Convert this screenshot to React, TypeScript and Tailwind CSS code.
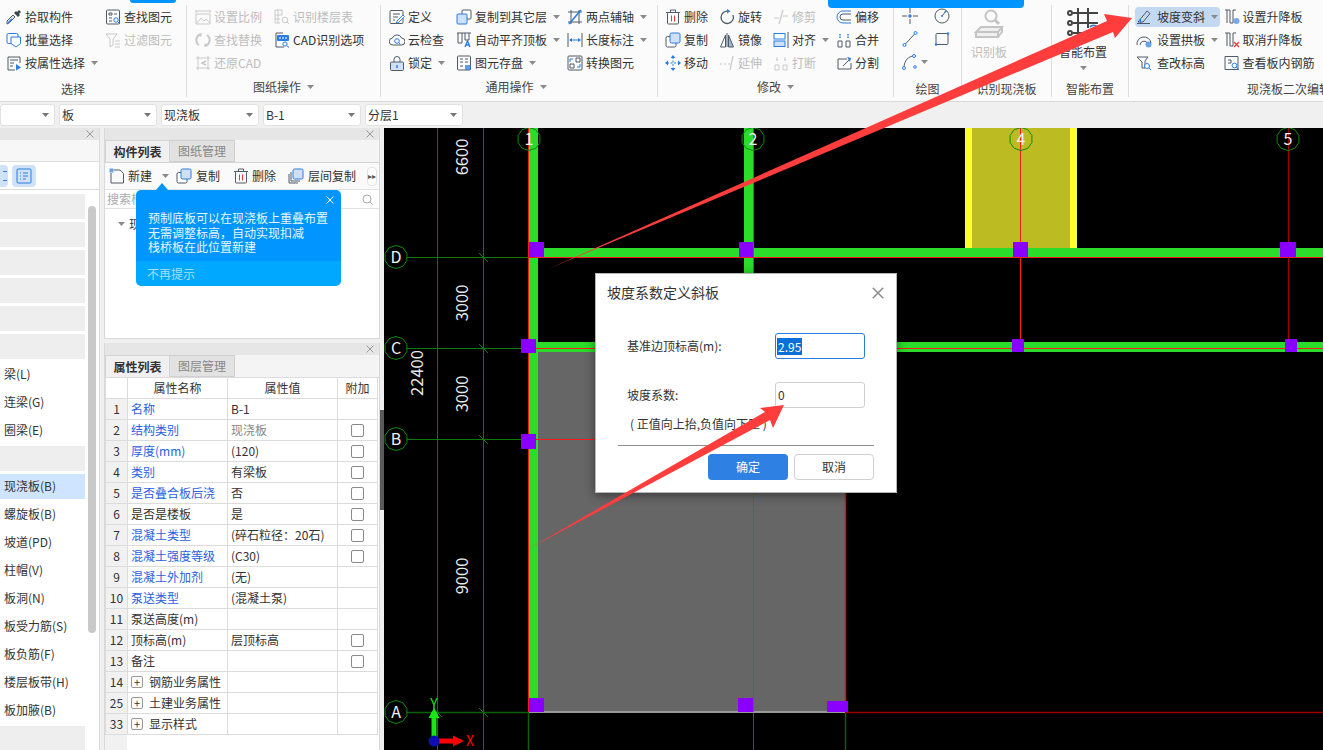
import type { ReactNode } from "react";

const D = "#4f5b66";
const B = "#2b7de0";
const L = "#cfe0f8";
const G = "#c9c9c9";
const R = "#e5393b";

function Ico({ children, size = 16 }: { children: ReactNode; size?: number }) {
  return (
    <svg width={size} height={size} viewBox="0 0 16 16" fill="none" strokeWidth="1" className="shrink-0">
      {children}
    </svg>
  );
}

const icons: Record<string, ReactNode> = {
  pick: (
    <>
      <path d="M1 15l2-1 6-6-2-2-6 6z" stroke={D} fill="#dfe6ee" />
      <path d="M8 4l4 4 2-2-1-1 2-2-2-2-2 2-1-1z" fill="#3d4852" />
      <path d="M2 14l4-4" stroke={B} strokeWidth="1.5" />
    </>
  ),
  batch: (
    <>
      <rect x="1" y="1.5" width="11" height="10" rx="1.5" stroke={B} />
      <path d="M5 5h9.5v6.5l-4.5 3.5-5-3.5z" stroke={B} fill="#fff" />
    </>
  ),
  attr: (
    <>
      <path d="M14 8V2H2v13h7" stroke={D} />
      <path d="M4 5h8M4 8h4M4 11h3" stroke={D} />
      <path d="M10 9l5 3.5-5 3z" fill={B} />
    </>
  ),
  find: (
    <>
      <rect x="1.5" y="1" width="13" height="14" rx="1" stroke={D} />
      <path d="M4 4h3v2H4zM9 5h3M4 9h3M4 12h3" stroke={D} />
      <circle cx="11" cy="11" r="2.2" stroke={B} fill="#fff" />
      <path d="M12.6 12.6L15 15" stroke={B} />
    </>
  ),
  filter: (
    <>
      <path d="M1 2h11L8 7v6L5 15V7z" stroke={G} />
      <path d="M10 9h5M10 12h5M10 15h5" stroke={G} />
    </>
  ),
  scale: (
    <>
      <path d="M1 5h14v10H1zM1 1v3M15 1v3M1 2h14" stroke={G} />
      <path d="M2 14l4-5 3 3 2-2 4 4" stroke={G} />
    </>
  ),
  floors: (
    <>
      <path d="M1 1h7v5H1zM1 6v8h5M4 1v13M1 10h5" stroke={G} />
      <circle cx="11" cy="11" r="2.8" stroke={G} />
      <path d="M13 13l2 2" stroke={G} />
    </>
  ),
  replace: (
    <>
      <path d="M5 2.5A6 6 0 0 0 4 13M11 13.5A6 6 0 0 0 12 3" stroke={G} strokeWidth="2" />
      <path d="M3 2l4-1-1 4zM13 14l-4 1 1-4z" fill={G} />
    </>
  ),
  cad: (
    <>
      <path d="M9 1H2v14h8" stroke={D} />
      <rect x="3" y="3" width="12" height="6" rx="1" fill={B} />
      <path d="M5 6h2M8 6h2M11 6h2" stroke="#fff" />
      <circle cx="11" cy="12" r="2.1" stroke={B} />
      <path d="M12.6 13.6L15 15.5" stroke={B} />
    </>
  ),
  restore: (
    <>
      <path d="M1 3h14M1 13h14M3 1v14M13 1v14" stroke={G} />
      <path d="M11 6L7 8l4 2" stroke={G} strokeWidth="1.5" />
    </>
  ),
  define: (
    <>
      <rect x="1" y="1.5" width="13" height="13" rx="1" stroke={D} />
      <path d="M4 5h7M4 8h5M4 11h2" stroke={D} />
      <path d="M8 12l6-6 1.5 1.5-6 6-2 .5z" stroke={B} fill="#fff" />
    </>
  ),
  cloud: (
    <>
      <path d="M4 13a3.5 3.5 0 0 1-.5-7 4.8 4.8 0 0 1 9 0 3.5 3.5 0 0 1 0 7z" stroke={D} />
      <circle cx="8" cy="9" r="2.3" stroke={B} />
      <path d="M9.6 10.6l1.8 1.6" stroke={B} />
    </>
  ),
  lock: (
    <>
      <path d="M5 7V4.5a3 3 0 0 1 6 0V7" stroke={D} />
      <rect x="1.5" y="7" width="13" height="8.5" rx="1" stroke={D} fill={L} />
      <path d="M8 10v3" stroke={B} strokeWidth="1.5" />
    </>
  ),
  copyTo: (
    <>
      <rect x="6" y="1" width="9" height="9" rx="1" stroke={D} fill="#fff" />
      <rect x="1" y="5" width="10" height="10" rx="1" stroke={B} fill={L} />
    </>
  ),
  autoTop: (
    <>
      <path d="M1 1h14" stroke={D} />
      <path d="M2 1v10h4V1M9 1v7h4V1" stroke={D} />
      <path d="M9 15l2.5-6 2.5 6M10 13h3" stroke={B} strokeWidth="1.4" />
    </>
  ),
  save: (
    <>
      <rect x="1.5" y="1" width="13" height="14" rx="1" stroke={D} />
      <path d="M4 4h3M9 4h3M4 7h3M9 7h3M4 11h3" stroke={D} />
      <rect x="9" y="10" width="5.5" height="5" fill={B} opacity=".75" />
    </>
  ),
  twoPoint: (
    <>
      <path d="M1 3h14M1 13h14M4 1v14M12 1v14" stroke={D} />
      <path d="M2 15L14 1" stroke={B} strokeWidth="1.6" />
    </>
  ),
  dim: (
    <>
      <path d="M1 1v14M15 1v14" stroke={D} />
      <path d="M3 8h10" stroke={B} />
      <path d="M2 8l3-2v4zM14 8l-3-2v4z" fill={B} />
    </>
  ),
  convert: (
    <>
      <rect x="1" y="1" width="14" height="14" rx="1" stroke={D} />
      <path d="M9 3h4v4H9zM3 9h4v4H3z" stroke={D} />
      <path d="M3 7V4h3M13 9v3h-3" stroke={B} />
    </>
  ),
  trash: (
    <>
      <path d="M1 3.5h14M5.5 3V1h5v2" stroke={D} />
      <rect x="2.5" y="3.5" width="11" height="11.5" rx="1" stroke={D} />
      <path d="M6.5 6.5v6M9.5 6.5v6" stroke={R} />
    </>
  ),
  copy: (
    <>
      <rect x="1" y="4.5" width="10" height="10.5" rx="1.5" stroke={D} fill="#fff" />
      <rect x="5" y="1" width="10" height="10" rx="1.5" stroke={B} fill={L} />
    </>
  ),
  floorCopy: (
    <>
      <path d="M1 6v9h9M3 4v9h9" stroke={D} />
      <rect x="5" y="1" width="10" height="10" rx="1.5" stroke={B} fill={L} />
    </>
  ),
  move: (
    <>
      <path d="M8 2v12M2 8h12" stroke={B} strokeDasharray="2 1.5" />
      <path d="M8 0l2.5 3h-5zM8 16l2.5-3h-5zM0 8l3-2.5v5zM16 8l-3-2.5v5z" fill={B} />
    </>
  ),
  rotate: (
    <>
      <path d="M9.5 2.2A6.2 6.2 0 1 0 14 6" stroke={D} strokeWidth="1.3" />
      <path d="M8 0l3.5 2.3L8 4.5z" fill={B} />
    </>
  ),
  mirror: (
    <>
      <path d="M8 1v14" stroke={D} />
      <path d="M6.5 3L1.5 15h5z" stroke={D} fill="#fff" />
      <path d="M9.5 3l5 12h-5z" fill="#9db6d6" stroke={D} />
    </>
  ),
  trim: (
    <>
      <path d="M1 9h5M10 7h5" stroke={G} strokeWidth="1.2" />
      <path d="M6 15L10 1" stroke={G} strokeWidth="1.2" />
    </>
  ),
  extend: (
    <>
      <path d="M1 9h2M5 9h2M9 9h2" stroke={G} strokeWidth="1.2" />
      <path d="M11 15l3-14" stroke={G} strokeWidth="1.2" />
    </>
  ),
  align: (
    <>
      <rect x="1" y="1.5" width="11" height="5.5" stroke={B} />
      <rect x="1" y="9" width="11" height="5.5" stroke={B} fill={L} />
      <path d="M15 0v16" stroke={D} />
    </>
  ),
  breakAt: (
    <>
      <path d="M2 15v-5h4v5zM10 15v-5h4v5z" stroke={G} />
      <path d="M4 2v3M3 5h2M12 2v3M11 5h2" stroke={G} />
    </>
  ),
  offset: (
    <>
      <path d="M15 2H7a6 6 0 0 0 0 12h8" stroke={B} />
      <path d="M15 5H7a3 3 0 0 0 0 6h8" stroke={D} />
    </>
  ),
  merge: (
    <>
      <path d="M2 15V9h4v6zM10 15V9h4v6z" stroke={D} />
      <path d="M4 2v4M12 2v4" stroke={B} strokeWidth="1.5" strokeDasharray="1.5 1" />
    </>
  ),
  split: (
    <>
      <path d="M11 4H2v10h13V8" stroke={D} />
      <path d="M7 11l7-7" stroke={D} />
      <path d="M11 2l4 1-1 4z" fill={B} />
    </>
  ),
  point: (
    <>
      <path d="M0 8h5M11 8h5M8 0v5M8 11v5" stroke={D} />
      <circle cx="8" cy="8" r="1.7" fill={B} />
    </>
  ),
  clock: (
    <>
      <circle cx="8" cy="8" r="7" stroke={D} />
      <path d="M8 8l4-5" stroke={D} />
      <circle cx="8" cy="8" r="1" fill={B} />
      <circle cx="11.5" cy="3.5" r="1" fill={B} />
    </>
  ),
  line: (
    <>
      <path d="M2.5 14L13.5 2" stroke={D} />
      <circle cx="2.5" cy="14" r="1.5" stroke={B} fill="#fff" />
      <circle cx="13.5" cy="2" r="1.5" stroke={B} fill="#fff" />
    </>
  ),
  rect: (
    <>
      <rect x="2" y="2.5" width="12" height="11" rx="1" stroke={D} />
      <circle cx="2" cy="13.5" r="1.2" fill={B} />
      <circle cx="14" cy="2.5" r="1.2" fill={B} />
    </>
  ),
  arc: (
    <>
      <path d="M2 14C2 6 7 2 12 2" stroke={D} />
      <circle cx="2" cy="14" r="1.5" stroke={B} fill="#fff" />
      <circle cx="12" cy="2" r="1.5" stroke={B} fill="#fff" />
      <circle cx="13" cy="13" r="1.3" stroke={B} fill="#fff" />
    </>
  ),
  slope: (
    <>
      <path d="M2 13L11 2l3 2.5L7 13z" stroke={D} />
      <path d="M1 14.5h13" stroke={D} />
      <path d="M4.5 10v4" stroke={B} />
    </>
  ),
  arch: (
    <>
      <path d="M1 13a7 7 0 0 1 14-2M4 13a4 4 0 0 1 7-2.5" stroke={D} />
      <circle cx="12.5" cy="12.5" r="3" fill={B} opacity=".7" />
    </>
  ),
  markup: (
    <>
      <path d="M1 2h11L9 6v7H6V7z" stroke={D} />
      <circle cx="11" cy="11" r="2.5" stroke={B} fill="#fff" />
      <path d="M13 13l2 2" stroke={B} />
    </>
  ),
  raise: (
    <>
      <path d="M1 1h5v13h3V1h3" stroke={D} />
      <path d="M3 1v13" stroke={D} />
      <circle cx="12.5" cy="12" r="3" fill={B} opacity=".65" />
    </>
  ),
  cancel: (
    <>
      <path d="M1 1h5v13h3V1h3" stroke={D} />
      <path d="M3 1v13" stroke={D} />
      <path d="M10 10l5 5M15 10l-5 5" stroke={R} strokeWidth="1.3" />
    </>
  ),
  rebar: (
    <>
      <path d="M1 1.5h13v13H1z" stroke={D} />
      <path d="M4 5h3v3M4 8h3" stroke={D} />
      <circle cx="10.5" cy="10.5" r="2.4" stroke={B} fill="#fff" />
      <path d="M12.3 12.3L15 15" stroke={B} />
    </>
  ),
  newDoc: (
    <>
      <path d="M5 2h6l3.5 3.5V15H2V5" stroke={D} />
      <rect x="0.5" y="0.5" width="4" height="4" fill={B} opacity=".7" />
    </>
  ),
  listIcon: (
    <>
      <rect x="1" y="1" width="14" height="14" rx="1" stroke={B} />
      <path d="M4 5h1M7 5h5M4 8h1M7 8h5M4 11h1M7 11h3" stroke={B} />
    </>
  ),
};

function Caret({ color = "#8a8a8a" }: { color?: string }) {
  return (
    <svg width="7" height="4" viewBox="0 0 7 4" className="shrink-0">
      <path d="M0 0h7L3.5 4z" fill={color} />
    </svg>
  );
}

type Item = { icon: string; label: string; caret?: boolean; off?: boolean; active?: boolean };
type Group = { label: string; labelClass: string; width: string; pad: string; cols: { w: string; items: Item[] }[] };

const groups: Group[] = [
  {
    label: "选择",
    labelClass: "pr-[40px] pt-[3px]",
    width: "w-[187px]",
    pad: "pl-[6px]",
    cols: [
      { w: "w-[99px]", items: [{ icon: "pick", label: "拾取构件" }, { icon: "batch", label: "批量选择" }, { icon: "attr", label: "按属性选择", caret: true }] },
      { w: "w-[80px]", items: [{ icon: "find", label: "查找图元" }, { icon: "filter", label: "过滤图元", off: true }] },
    ],
  },
  {
    label: "图纸操作",
    labelClass: "",
    width: "w-[194px]",
    pad: "pl-[8px]",
    cols: [
      { w: "w-[79px]", items: [{ icon: "scale", label: "设置比例", off: true }, { icon: "replace", label: "查找替换", off: true }, { icon: "restore", label: "还原CAD", off: true }] },
      { w: "w-[100px]", items: [{ icon: "floors", label: "识别楼层表", off: true }, { icon: "cad", label: "CAD识别选项" }] },
    ],
  },
  {
    label: "通用操作",
    labelClass: "pr-[6px]",
    width: "w-[277px]",
    pad: "pl-[8px]",
    cols: [
      { w: "w-[67px]", items: [{ icon: "define", label: "定义" }, { icon: "cloud", label: "云检查" }, { icon: "lock", label: "锁定", caret: true }] },
      { w: "w-[111px]", items: [{ icon: "copyTo", label: "复制到其它层", caret: true }, { icon: "autoTop", label: "自动平齐顶板", caret: true }, { icon: "save", label: "图元存盘", caret: true }] },
      { w: "w-[88px]", items: [{ icon: "twoPoint", label: "两点辅轴", caret: true }, { icon: "dim", label: "长度标注", caret: true }, { icon: "convert", label: "转换图元" }] },
    ],
  },
  {
    label: "修改",
    labelClass: "",
    width: "w-[236px]",
    pad: "pl-[7px]",
    cols: [
      { w: "w-[54px]", items: [{ icon: "trash", label: "删除" }, { icon: "copy", label: "复制" }, { icon: "move", label: "移动" }] },
      { w: "w-[54px]", items: [{ icon: "rotate", label: "旋转" }, { icon: "mirror", label: "镜像" }, { icon: "extend", label: "延伸", off: true }] },
      { w: "w-[63px]", items: [{ icon: "trim", label: "修剪", off: true }, { icon: "align", label: "对齐", caret: true }, { icon: "breakAt", label: "打断", off: true }] },
      { w: "w-[52px]", items: [{ icon: "offset", label: "偏移" }, { icon: "merge", label: "合并" }, { icon: "split", label: "分割" }] },
    ],
  },
];

function RibbonItem({ item, textMl = "ml-[3px]" }: { item: Item; textMl?: string }) {
  return (
    <div className={`flex h-[20px] items-center whitespace-nowrap ${item.off ? "text-[#bdbdbd]" : "text-[#333]"} ${item.active ? "-ml-[1px] w-[85px] rounded bg-[#c3d9f2] pl-[1px]" : ""}`}>
      <Ico>{icons[item.icon]}</Ico>
      <span className={textMl}>{item.label}</span>
      {item.caret && (
        <span className="ml-[6px]">
          <Caret />
        </span>
      )}
    </div>
  );
}

function Column({ w, items, textMl }: { w: string; items: Item[]; textMl?: string }) {
  return (
    <div className={`flex flex-col gap-[3px] ${w}`}>
      {items.map((it) => (
        <RibbonItem key={it.label} item={it} textMl={textMl} />
      ))}
    </div>
  );
}

function RibbonGroup({ width, label, labelClass, caret, border = true, children }: { width: string; label: string; labelClass?: string; caret?: boolean; border?: boolean; children: ReactNode }) {
  return (
    <div className={`mt-[5px] flex h-[92px] shrink-0 flex-col ${width} ${border ? "border-r border-[#dedede]" : ""}`}>
      <div className="h-[72px] pt-[2px]">{children}</div>
      <div className={`flex h-[20px] items-center justify-center gap-[6px] whitespace-nowrap text-[#444] ${labelClass ?? ""}`}>
        <span>{label}</span>
        {caret && <Caret />}
      </div>
    </div>
  );
}

function Ribbon() {
  return (
    <div className="flex h-[102px] shrink-0 border-b border-[#d9d9d9] bg-[#fbfbfb]">
      {groups.map((g) => (
        <RibbonGroup key={g.label} width={g.width} label={g.label} labelClass={g.labelClass} caret={g.label !== "选择"}>
          <div className={`flex ${g.pad}`}>
            {g.cols.map((c) => (
              <Column key={c.items[0].label} w={c.w} items={c.items} />
            ))}
          </div>
        </RibbonGroup>
      ))}
      <RibbonGroup width="w-[68px]" label="绘图" labelClass="pt-[3px]">
        <div className="flex pl-[8px] pt-[1px]">
          <div className="flex w-[32px] flex-col gap-[7px]">
            <Ico>{icons.point}</Ico>
            <Ico>{icons.line}</Ico>
            <div className="flex items-center gap-[3px]">
              <Ico>{icons.arc}</Ico>
              <Caret />
            </div>
          </div>
          <div className="flex flex-col gap-[7px]">
            <Ico>{icons.clock}</Ico>
            <Ico>{icons.rect}</Ico>
          </div>
        </div>
      </RibbonGroup>
      <RibbonGroup width="w-[90px]" label="识别现浇板" labelClass="pt-[3px]">
        <div className="flex flex-col items-center gap-[6px] pr-[35px] pt-[1px] text-[#bdbdbd]">
          <svg width="30" height="30" viewBox="0 0 30 30" fill="none" stroke="#c4c4c4" strokeWidth="2">
            <circle cx="17" cy="8" r="5.5" />
            <path d="M21 12l4 4" strokeWidth="3" />
            <path d="M2 24l5-5h21l-4 5zM2 24v5h22v-5M24 29l4-5v-5" fill="#f0f0f0" />
          </svg>
          <span className="leading-[16px]">识别板</span>
        </div>
      </RibbonGroup>
      <RibbonGroup width="w-[77px]" label="智能布置" labelClass="pt-[3px]">
        <div className="flex flex-col items-center pr-[14px] pt-[1px] text-[#333]">
          <svg width="32" height="30" viewBox="0 0 32 30" fill="none" stroke="#444" strokeWidth="2">
            <path d="M6 5h25M6 15h25M6 25h12M11 0v30M21 0v20" />
            <circle cx="3" cy="5" r="2" />
            <circle cx="3" cy="15" r="2" />
            <circle cx="3" cy="25" r="2" />
            <path d="M30 19a5 5 0 0 0-7 0M23 26h7" stroke={B} />
          </svg>
          <span className="mt-[6px] leading-[16px]">智能布置</span>
          <span className="mt-[6px]">
            <Caret />
          </span>
        </div>
      </RibbonGroup>
      <RibbonGroup width="w-[194px]" label="现浇板二次编辑" labelClass="!justify-start pl-[118px] pt-[3px]" border={false}>
        <div className="flex pl-[7px]">
          <Column
            w="w-[88px]"
            textMl="ml-[5px]"
            items={[
              { icon: "slope", label: "坡度变斜", caret: true, active: true },
              { icon: "arch", label: "设置拱板", caret: true },
              { icon: "markup", label: "查改标高" },
            ]}
          />
          <Column
            w="w-[100px]"
            items={[
              { icon: "raise", label: "设置升降板" },
              { icon: "cancel", label: "取消升降板" },
              { icon: "rebar", label: "查看板内钢筋" },
            ]}
          />
        </div>
      </RibbonGroup>
    </div>
  );
}

function Combo({ label, w }: { label: string; w: string }) {
  return (
    <div className={`flex h-[22px] items-center justify-between rounded-[3px] border border-[#e2e2e2] bg-white pl-[2px] pr-[5px] text-[#333] ${w}`}>
      <span>{label}</span>
      <Caret color="#777" />
    </div>
  );
}

function Toolbar() {
  return (
    <div className="flex h-[26px] shrink-0 items-center gap-[4px] bg-[#f0f0f0]">
      <Combo label="" w="w-[55px]" />
      <Combo label="板" w="w-[98px]" />
      <Combo label="现浇板" w="w-[98px]" />
      <Combo label="B-1" w="w-[98px]" />
      <Combo label="分层1" w="w-[98px]" />
    </div>
  );
}

function CloseX({ color = "#9a9a9a", size = 8 }: { color?: string; size?: number }) {
  return (
    <svg width={size} height={size} viewBox="0 0 8 8" className="shrink-0">
      <path d="M0.5 0.5l7 7M7.5 0.5l-7 7" stroke={color} strokeWidth="1" />
    </svg>
  );
}

function PanelHeader() {
  return (
    <div className="flex h-[12px] shrink-0 items-center justify-end bg-[#e6e6e6] pr-[5px]">
      <CloseX />
    </div>
  );
}

const sideList: (string | null)[] = [null, null, null, null, null, null, "梁(L)", "连梁(G)", "圈梁(E)", null, "现浇板(B)", "螺旋板(B)", "坡道(PD)", "柱帽(V)", "板洞(N)", "板受力筋(S)", "板负筋(F)", "楼层板带(H)", "板加腋(B)", null];

function LeftPanel() {
  return (
    <div className="flex w-[100px] shrink-0 flex-col overflow-hidden border-r border-[#dcdcdc] bg-white">
      <PanelHeader />
      <div className="h-[22px] shrink-0 border-b border-[#dcdcdc] bg-[#f7f7f7]" />
      <div className="flex h-[28px] shrink-0 items-center gap-[4px] border-b border-[#dcdcdc]">
        <div className="flex h-[22px] w-[8px] items-center justify-end rounded-r bg-[#cfe2f8] pr-[1px]">
          <div className="h-[10px] w-[4px] border-y border-[#2b7de0]" />
        </div>
        <div className="flex h-[22px] w-[24px] items-center justify-center rounded bg-[#cfe2f8]">
          <Ico>{icons.listIcon}</Ico>
        </div>
      </div>
      <div className="flex min-h-0 flex-1">
        <div className="flex w-[85px] shrink-0 flex-col gap-[3px] pt-[4px]">
          {sideList.map((t, i) =>
            t === null ? (
              <div key={i} className="h-[25px] shrink-0 bg-[#eeeeee]" />
            ) : (
              <div key={i} className={`flex h-[25px] shrink-0 items-center pb-[2px] pl-[4px] text-[#333] ${t === "现浇板(B)" ? "bg-[#cfe5ff]" : ""}`}>
                {t}
              </div>
            )
          )}
        </div>
        <div className="ml-[3px] mt-[16px] h-[427px] w-[8px] rounded-full bg-[#c9c9c9]" />
      </div>
    </div>
  );
}

function Tabs({ a, b }: { a: string; b: string }) {
  return (
    <div className="flex h-[23px] shrink-0 border-b border-[#d4d4d4] bg-[#f4f4f4]">
      <div className="flex w-[65px] items-center justify-center border border-b-0 border-[#d4d4d4] bg-[#f0f0f0] font-bold text-[#333]">{a}</div>
      <div className="flex w-[65px] items-center justify-center border border-l-0 border-[#cfcfcf] bg-[#e2e2e2] text-[#888]">{b}</div>
    </div>
  );
}

function TopPanel() {
  return (
    <div className="flex h-[211px] shrink-0 flex-col border border-t-0 border-[#d8d8d8] bg-white">
      <PanelHeader />
      <Tabs a="构件列表" b="图纸管理" />
      <div className="flex h-[27px] shrink-0 items-center whitespace-nowrap border-b border-[#e2e2e2] bg-[#fafafa] pl-[4px] text-[#333]">
        <Ico>{icons.newDoc}</Ico>
        <span className="ml-[3px]">新建</span>
        <span className="ml-[10px]">
          <Caret />
        </span>
        <span className="ml-[7px]">
          <Ico>{icons.copy}</Ico>
        </span>
        <span className="ml-[4px]">复制</span>
        <span className="ml-[13px]">
          <Ico>{icons.trash}</Ico>
        </span>
        <span className="ml-[3px]">删除</span>
        <span className="ml-[12px]">
          <Ico>{icons.floorCopy}</Ico>
        </span>
        <span className="ml-[4px]">层间复制</span>
        <div className="ml-[11px] flex h-[19px] w-[10px] shrink-0 items-center justify-center rounded border border-[#e2e2e2] bg-white text-[8px] leading-none text-[#555]">
          ▸▸
        </div>
      </div>
      <div className="flex h-[19px] shrink-0 items-center justify-between border-b border-[#e2e2e2] pl-[2px] pr-[6px] text-[#aaa]">
        <span>搜索构件</span>
        <svg width="11" height="11" viewBox="0 0 11 11" fill="none" stroke="#aaa">
          <circle cx="5" cy="5" r="4" />
          <path d="M8 8l2.5 2.5" />
        </svg>
      </div>
      <div className="flex items-center gap-[4px] pl-[13px] pt-[6px] text-[#333]">
        <Caret />
        <span>现浇板</span>
      </div>
    </div>
  );
}

type Row = { n: number; name: string; value?: string; link?: boolean; check?: boolean; muted?: boolean; expand?: boolean };

const rows: Row[] = [
  { n: 1, name: "名称", value: "B-1", link: true },
  { n: 2, name: "结构类别", value: "现浇板", link: true, check: true, muted: true },
  { n: 3, name: "厚度(mm)", value: "(120)", link: true, check: true },
  { n: 4, name: "类别", value: "有梁板", link: true, check: true },
  { n: 5, name: "是否叠合板后浇", value: "否", link: true, check: true },
  { n: 6, name: "是否是楼板", value: "是", check: true },
  { n: 7, name: "混凝土类型", value: "(碎石粒径：20石)", link: true, check: true },
  { n: 8, name: "混凝土强度等级", value: "(C30)", link: true, check: true },
  { n: 9, name: "混凝土外加剂", value: "(无)", link: true },
  { n: 10, name: "泵送类型", value: "(混凝土泵)", link: true },
  { n: 11, name: "泵送高度(m)" },
  { n: 12, name: "顶标高(m)", value: "层顶标高", check: true },
  { n: 13, name: "备注", check: true },
  { n: 14, name: "钢筋业务属性", expand: true },
  { n: 25, name: "土建业务属性", expand: true },
  { n: 33, name: "显示样式", expand: true },
];

function PropsTable() {
  const cell = "border border-[#dcdcdc] h-[21px] p-0";
  return (
    <table className="-mt-[1px] w-[272px] table-fixed border-collapse text-[12px] leading-none">
      <colgroup>
        <col className="w-[22px]" />
        <col className="w-[100px]" />
        <col className="w-[110px]" />
        <col className="w-[40px]" />
      </colgroup>
      <thead>
        <tr className="font-normal text-[#333]">
          <th className={`${cell} font-normal`} />
          <th className={`${cell} font-normal`}>属性名称</th>
          <th className={`${cell} font-normal`}>属性值</th>
          <th className={`${cell} font-normal`}>附加</th>
        </tr>
      </thead>
      <tbody>
        {rows.map((r) => (
          <tr key={r.n}>
            <td className={`${cell} bg-[#f1f1f1] text-center text-[#333]`}>{r.n}</td>
            <td className={`${cell} whitespace-nowrap pl-[3px] ${r.link ? "text-[#2a5fe0]" : "text-[#333]"}`}>
              {r.expand ? (
                <span className="flex items-center gap-[6px]">
                  <span className="flex h-[12px] w-[12px] items-center justify-center rounded-[2px] border border-[#999] text-[11px] leading-none">+</span>
                  {r.name}
                </span>
              ) : (
                r.name
              )}
            </td>
            <td className={`${cell} whitespace-nowrap pl-[3px] ${r.muted ? "text-[#888]" : "text-[#333]"}`}>{r.value}</td>
            <td className={cell}>{r.check && <div className="mx-auto h-[13px] w-[13px] rounded-[2px] border border-[#8a8a8a] bg-white" />}</td>
          </tr>
        ))}
      </tbody>
    </table>
  );
}

function BottomPanel() {
  return (
    <div className="mt-[4px] flex min-h-0 flex-1 flex-col overflow-hidden border-x border-[#d8d8d8] bg-white">
      <PanelHeader />
      <Tabs a="属性列表" b="图层管理" />
      <PropsTable />
      <div className="w-[22px] flex-1 bg-[#f1f1f1]" />
    </div>
  );
}

function decagon(cx: number, cy: number, r: number) {
  return Array.from({ length: 10 }, (_, i) => {
    const a = (Math.PI * 2 * i) / 10 + Math.PI / 10;
    return `${(cx + r * Math.cos(a)).toFixed(1)},${(cy + r * Math.sin(a)).toFixed(1)}`;
  }).join(" ");
}

const GREEN = "#2bdc2b";
const PURPLE = "#8a00ff";
const DIM = "#0b7a0b";

const squares = [
  [529, 242, 15, 15],
  [739, 242, 14, 15],
  [1013, 242, 15, 15],
  [1280, 242, 16, 15],
  [521, 339, 15, 14],
  [1012, 339, 12, 13],
  [1285, 339, 12, 13],
  [521, 434, 15, 15],
  [529, 698, 15, 14],
  [738, 698, 15, 14],
  [827, 701, 21, 11],
];

const bubbles: [string, number, number][] = [
  ["1", 529, 139],
  ["2", 753, 139],
  ["4", 1021, 139],
  ["5", 1288, 139],
  ["D", 396, 257],
  ["C", 396, 348],
  ["B", 396, 439],
  ["A", 396, 712],
];

const dims: [string, number, number][] = [
  ["6600", 461, 157],
  ["3000", 461, 303],
  ["3000", 461, 394],
  ["9000", 461, 576],
  ["22400", 416, 373],
];

function CadDrawing() {
  return (
    <svg viewBox="384 128 939 622" width="939" height="622" className="block">
      <rect x="538" y="352" width="307" height="360" fill="#666666" />
      <rect x="965" y="128" width="112" height="120" fill="#ffff2e" />
      <rect x="972" y="128" width="98" height="120" fill="#bcbc22" />
      <rect x="529" y="128" width="9" height="584" fill={GREEN} />
      <rect x="744" y="128" width="9" height="150" fill={GREEN} />
      <rect x="538" y="248" width="785" height="9" fill={GREEN} />
      <rect x="538" y="342" width="785" height="10" fill={GREEN} />

      <g stroke={DIM} strokeWidth="1">
        <path d="M437.5 128V750M483.5 128V750" />
        <path d="M407 257.5H528M407 348.5H528M407 439.5H521" />
        <path d="M479 253l9 9M479 344l9 9M479 435l9 9M479 708l9 9M433 708l9 9" />
      </g>
      <path d="M407 712.5H528" stroke="#0b5f0b" strokeWidth="1.5" />
      <path d="M528.5 712V750M845.5 712V750" stroke="#0b5f0b" strokeWidth="1.5" />
      <path d="M753.5 712V750" stroke={DIM} />
      <rect x="529" y="711" width="316" height="2" fill="#9a9a9a" />

      <g stroke="#ff1a1a" strokeWidth="1">
        <path d="M528.5 128V712" />
        <path d="M753.5 128V280M753.5 490V712" />
        <path d="M529 257.5H1323M529 348.5H1323M536 439.5H600" />
        <path d="M1020.5 128V350" />
      </g>
      <path d="M1288.5 128V350" stroke="#a00000" />
      <path d="M845.5 352V712" stroke="#e01010" strokeWidth="1.5" />
      <path d="M845 712.5H1323" stroke="#a00000" strokeWidth="1.5" />

      {squares.map(([x, y, w, h]) => (
        <rect key={`${x}-${y}`} x={x} y={y} width={w} height={h} fill={PURPLE} />
      ))}
      {bubbles.map(([t, x, y]) => (
        <g key={t}>
          <polygon points={decagon(x, y, 11.5)} fill="none" stroke="#0f8a0f" />
          <text x={x} y={y + 5.5} textAnchor="middle" fontSize="16" fill="#f2f2f2">
            {t}
          </text>
        </g>
      ))}
      {dims.map(([t, x, y]) => (
        <text key={`${t}-${y}`} x={x} y={y} transform={`rotate(-90 ${x} ${y})`} textAnchor="middle" dominantBaseline="central" fontSize="16.5" fill="#e8e8e8">
          {t}
        </text>
      ))}

      <path d="M434 741V712" stroke="#19e619" strokeWidth="5" />
      <path d="M434 708l5.5 10h-11z" fill="#19e619" />
      <path d="M434 741h23" stroke="#ff0000" strokeWidth="5" />
      <path d="M464 741l-11 5.5v-11z" fill="#ff0000" />
      <circle cx="434" cy="741" r="5.5" fill="#0a10b0" />
      <text x="434" y="709" textAnchor="middle" fontSize="14" fill="#19e619">
        Y
      </text>
      <text x="470" y="746" textAnchor="middle" fontSize="14" fill="#ff0000">
        X
      </text>
    </svg>
  );
}

function Tip() {
  return (
    <div className="absolute left-[136px] top-[190px] w-[205px] text-[12px]">
      <div className="absolute -top-[7px] left-[20px] h-0 w-0 border-x-[6px] border-b-[7px] border-x-transparent border-b-[#0095ff]" />
      <div className="flex h-[71px] flex-col rounded-t-[5px] bg-[#0095ff] pl-[12px] pr-[6px] pt-[6px] leading-[14.5px] text-[#e8f5ff]">
        <div className="flex justify-end pr-[1px]">
          <CloseX color="#fff" />
        </div>
        <div className="mt-[7px] whitespace-nowrap">
          预制底板可以在现浇板上重叠布置
          <br />
          无需调整标高，自动实现扣减
          <br />
          栈桥板在此位置新建
        </div>
      </div>
      <div className="flex h-[25px] items-center rounded-b-[5px] bg-[#00a8ff] pl-[11px] text-[#a6defc]">不再提示</div>
    </div>
  );
}

function SlopeDialog() {
  return (
    <div className="absolute left-[595px] top-[273px] flex h-[220px] w-[302px] flex-col border border-[#b5b5b5] bg-white px-[22px] text-[12px] text-[#333] shadow-[0_2px_10px_rgba(0,0,0,0.45)]">
      <div className="-ml-[11px] -mr-[10px] flex h-[37px] shrink-0 items-center justify-between text-[14px]">
        <span>坡度系数定义斜板</span>
        <CloseX size={12} color="#8c8c8c" />
      </div>
      <div className="mt-[22px] flex items-center pl-[9px]">
        <span className="w-[148px]">基准边顶标高(m):</span>
        <div className="flex h-[26px] w-[90px] items-center rounded-[3px] border border-[#2b7de0] pl-[1px]">
          <span className="bg-[#0a6fd6] px-[1px] leading-[17px] text-white">2.95</span>
        </div>
      </div>
      <div className="mt-[23px] flex items-center pl-[9px]">
        <span className="w-[148px]">坡度系数:</span>
        <div className="flex h-[26px] w-[90px] items-center rounded-[3px] border border-[#cfcfcf] pl-[2px]">0</div>
      </div>
      <div className="mt-[7px] pl-[12px] leading-[18px]">( 正值向上抬,负值向下压 )</div>
      <div className="mt-[12px] border-t border-[#8f8f8f]" />
      <div className="mt-[8px] flex justify-end gap-[6px]">
        <div className="flex h-[26px] w-[80px] items-center justify-center rounded-[4px] bg-[#2e80e3] text-white">确定</div>
        <div className="flex h-[26px] w-[80px] items-center justify-center rounded-[4px] border border-[#cfcfcf]">取消</div>
      </div>
    </div>
  );
}

function Arrows() {
  return (
    <svg className="pointer-events-none absolute left-0 top-0" width="1323" height="750" viewBox="0 0 1323 750">
      <polygon points="548,269 1107,21 1104,14 1132,18 1115,38 1113,32" fill="#ff3d3d" />
      <polygon points="530,548 765,412 760,408 784,405 773,428 770,420" fill="#ff3d3d" />
    </svg>
  );
}

export default function App() {
  return (
    <div className="relative flex h-[750px] w-[1323px] flex-col overflow-hidden bg-[#f0f0f0] font-['Noto_Sans_CJK_SC','Liberation_Sans',sans-serif] text-[12px]">
      <Ribbon />
      <Toolbar />
      <div className="flex min-h-0 flex-1">
        <LeftPanel />
        <div className="ml-[4px] flex w-[276px] shrink-0 flex-col">
          <TopPanel />
          <BottomPanel />
        </div>
        <div className="flex w-[4px] shrink-0 flex-col pt-[282px]">
          <div className="h-[100px] w-[4px] bg-[#5a5a5a]" />
        </div>
        <div className="min-w-0 flex-1 bg-black">
          <CadDrawing />
        </div>
      </div>
      <div className="absolute left-[130px] top-0 h-[3px] w-[46px] rounded-b bg-[#0095ff]" />
      <div className="absolute left-[828px] top-0 h-[8px] w-[196px] rounded-b bg-[#0095ff]" />
      <Tip />
      <SlopeDialog />
      <Arrows />
    </div>
  );
}
